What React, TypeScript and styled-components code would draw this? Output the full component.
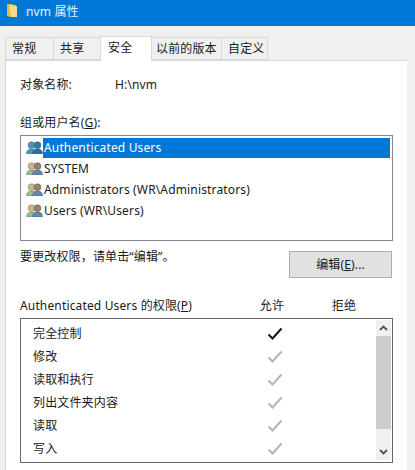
import React from "react";
import styled, { createGlobalStyle } from "styled-components";

const Global = createGlobalStyle`
  html, body { margin: 0; padding: 0; background: #f0f0f0; }
  body { width: 415px; height: 470px; overflow: hidden; font-family: "Noto Sans", "Noto Sans CJK SC", sans-serif; font-size: 12px; letter-spacing: 0.15px; color: #1a1a1a; }
`;

const Window = styled.div`
  width: 415px; height: 470px; display: flex; flex-direction: column; background: #f0f0f0; overflow: hidden;
`;
const TitleBar = styled.div`
  height: 26px; box-sizing: border-box; padding: 0 0 5px 7px; background: #0078d7; display: flex; align-items: center; gap: 9px; color: #e8f2fb; font-size: 12px; flex: none;
`;
const TabStrip = styled.div`
  display: flex; align-items: flex-end; height: 34px; padding-left: 5px; flex: none; position: relative; z-index: 1;
`;
const Tab = styled.div<{ $w: number; $pad: number; $active?: boolean }>`
  width: ${p => p.$w}px;
  height: ${p => (p.$active ? 25 : 23)}px;
  margin-bottom: ${p => (p.$active ? -1 : 0)}px;
  box-sizing: border-box;
  padding-left: ${p => p.$pad}px;
  padding-bottom: ${p => (p.$active ? 2 : 0)}px;
  background: ${p => (p.$active ? "#fff" : "#f0f0f0")};
  border: 1px solid #d9d9d9;
  border-bottom: ${p => (p.$active ? "none" : "1px solid #d9d9d9")};
  margin-right: -1px;
  position: relative;
  z-index: ${p => (p.$active ? 2 : 1)};
  display: flex; align-items: center;
  font-size: 12px; line-height: 1; white-space: nowrap;
`;
const Panel = styled.div`
  width: 402px; margin-left: 5px; height: 420px; box-sizing: border-box; background: #fff;
  border-left: 1px solid #d9d9d9; border-top: 1px solid #d9d9d9; padding: 0 13px 0 14px;
  display: flex; flex-direction: column;
`;
const ObjectRow = styled.div`
  display: flex; height: 18px; margin-top: 15px; align-items: center; line-height: 18px;
`;
const ObjectLabel = styled.span` width: 95px; `;
const GroupLabel = styled.div` margin-top: 20px; height: 18px; line-height: 18px; `;
const Key = styled.span` text-decoration: underline; text-underline-offset: 1px; `;
const UserList = styled.div`
  margin-top: 3px; width: 373px; height: 106px; box-sizing: border-box; border: 1px solid #828790; padding-top: 1px; display: flex; flex-direction: column;
`;
const UserRow = styled.div`
  height: 21px; display: flex; align-items: center; padding-left: 5px; flex: none;
`;
const UserName = styled.div<{ $sel?: boolean }>`
  flex: 1; height: 20px; line-height: 20px; margin-right: 2px; padding-left: 1px;
  background: ${p => (p.$sel ? "#0078d7" : "transparent")};
  color: ${p => (p.$sel ? "#fff" : "#1a1a1a")};
`;
const EditRow = styled.div`
  display: flex; justify-content: space-between; align-items: flex-start; margin-top: 10px; width: 372px;
`;
const Hint = styled.span` line-height: 18px; margin-top: -3px; `;
const EditButton = styled.div`
  width: 103px; height: 27px; box-sizing: border-box; background: #e1e1e1; border: 1px solid #adadad;
  display: flex; align-items: center; justify-content: center; font-size: 12px; padding-bottom: 1px;
`;
const PermHeader = styled.div`
  display: grid; grid-template-columns: 216px 72px 72px; margin-top: 19px; height: 18px; line-height: 18px;
`;
const Center = styled.span` text-align: center; `;
const PermBox = styled.div`
  margin-top: 3px; width: 373px; height: 145px; box-sizing: border-box; border: 1px solid #666; display: flex;
`;
const PermRows = styled.div`
  flex: 1; padding-top: 3px; display: flex; flex-direction: column;
`;
const PermRow = styled.div`
  height: 23px; display: grid; grid-template-columns: 234px 30px; align-items: center; padding-left: 12px;
  line-height: 18px;
`;
const CheckCell = styled.span` display: flex; justify-content: flex-start; `;
const ScrollBar = styled.div`
  width: 15px; margin: 1px 1px 2px 0; background: #f0f0f0; display: flex; flex-direction: column; align-items: center;
`;
const ScrollArrow = styled.div`
  height: 16px; flex: none; display: flex; align-items: center; justify-content: center;
`;
const ScrollThumb = styled.div`
  width: 15px; height: 93px; background: #cdcdcd; flex: none;
`;
const Spacer = styled.div` flex: 1; `;

const FolderIcon = () => (
  <svg width="10" height="13" viewBox="0 0 10 13">
    <path d="M0 0h5l2 1h2v12H3l-3-1z" fill="#dcb84e" />
    <path d="M2 1.500h6l2 1V13H4z" fill="#f6dc8a" />
  </svg>
);

const Person = ({ x, body, head, edge }: { x: number; body: string; head: string; edge: string }) => (
  <g transform={`translate(${x} 0)`} stroke={edge} strokeWidth="0.6">
    <path d="M0.500 13c0-3.500 1.800-5 5-5s5 1.500 5 5z" fill={body} />
    <circle cx="5.500" cy="4.200" r="3.400" fill={head} />
  </g>
);

const UsersIcon = ({ selected }: { selected?: boolean }) => (
  <svg width="17" height="13" viewBox="0 0 17 13" style={{ flex: "none" }}>
    {selected ? (
      <>
        <Person x={0} body="#4b9aa8" head="#4f93ad" edge="#3a7a94" />
        <Person x={6} body="#2a6ea6" head="#3577a8" edge="#2a5f8c" />
      </>
    ) : (
      <>
        <Person x={0} body="#8fc08f" head="#cbb58a" edge="#8d8a66" />
        <Person x={6} body="#5d87b5" head="#9a8260" edge="#5a6470" />
      </>
    )}
  </svg>
);

const Check = ({ dark }: { dark?: boolean }) => (
  <svg width="16" height="14" viewBox="0 0 16 14">
    <path d="M1.500 7.500l4 4 9-10" fill="none" stroke={dark ? "#111" : "#b4b4b4"} strokeWidth="2" />
  </svg>
);

const Chevron = ({ up }: { up?: boolean }) => (
  <svg width="9" height="6" viewBox="0 0 9 6">
    <path d={up ? "M1 5l3.500-3.500L8 5" : "M1 1l3.500 3.500L8 1"} fill="none" stroke="#505050" strokeWidth="1.800" />
  </svg>
);

const users = ["Authenticated Users", "SYSTEM", "Administrators (WR\\Administrators)", "Users (WR\\Users)"];
const perms = ["完全控制", "修改", "读取和执行", "列出文件夹内容", "读取", "写入"];
const tabs: [string, number, number][] = [["常规", 49, 6], ["共享", 48, 6], ["安全", 52, 7], ["以前的版本", 71, 4], ["自定义", 47, 6]];

export default function App() {
  return (
    <Window>
      <Global />
      <TitleBar><FolderIcon /><span>nvm 属性</span></TitleBar>
      <TabStrip>
        {tabs.map(([t, w, pad]) => <Tab key={t} $w={w} $pad={pad} $active={t === "安全"}>{t}</Tab>)}
      </TabStrip>
      <Panel>
        <ObjectRow><ObjectLabel>对象名称:</ObjectLabel><span>H:\nvm</span></ObjectRow>
        <GroupLabel>组或用户名(<Key>G</Key>):</GroupLabel>
        <UserList>
          {users.map((u, i) => (
            <UserRow key={u}><UsersIcon selected={i === 0} /><UserName $sel={i === 0}>{u}</UserName></UserRow>
          ))}
        </UserList>
        <EditRow>
          <Hint>要更改权限，请单击“编辑”。</Hint>
          <EditButton><span>编辑(<Key>E</Key>)...</span></EditButton>
        </EditRow>
        <PermHeader>
          <span>Authenticated Users 的权限(<Key>P</Key>)</span>
          <Center>允许</Center>
          <Center>拒绝</Center>
        </PermHeader>
        <PermBox>
          <PermRows>
            {perms.map((p, i) => (
              <PermRow key={p}><span>{p}</span><CheckCell><Check dark={i === 0} /></CheckCell></PermRow>
            ))}
          </PermRows>
          <ScrollBar>
            <ScrollArrow><Chevron up /></ScrollArrow>
            <ScrollThumb />
            <Spacer />
            <ScrollArrow><Chevron /></ScrollArrow>
          </ScrollBar>
        </PermBox>
      </Panel>
    </Window>
  );
}
